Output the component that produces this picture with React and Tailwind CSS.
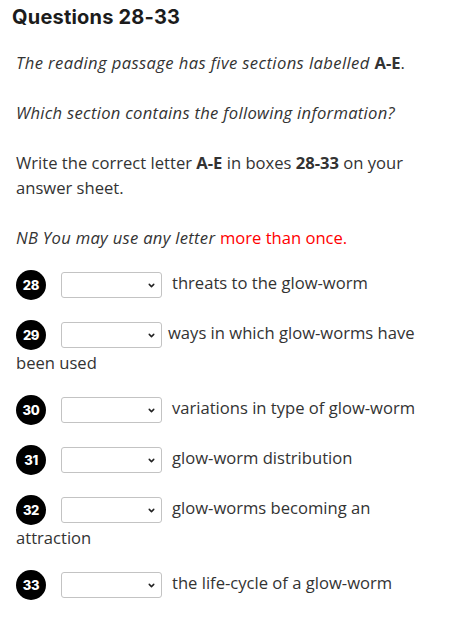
import { ChevronDown } from "lucide-react";

const rows = [
  { n: 28, text: "threats to the glow-worm", gap: "mr-[10px]" },
  { n: 29, text: "ways in which glow-worms have been used", gap: "mr-[6px]" },
  { n: 30, text: "variations in type of glow-worm", gap: "mr-[10px]" },
  { n: 31, text: "glow-worm distribution", gap: "mr-[10px]" },
  { n: 32, text: "glow-worms becoming an attraction", gap: "mr-[10px]" },
  { n: 33, text: "the life-cycle of a glow-worm", gap: "mr-[10px]" },
];

function Row({ n, text, gap }) {
  return (
    <div className="mb-5 leading-[25px]">
      <span className="mr-[15px] inline-flex h-[30px] w-[30px] items-center justify-center rounded-full bg-black align-middle font-['Inter',sans-serif] text-[13px] font-extrabold tracking-tight text-white">
        {n}
      </span>
      <span className={`relative inline-block h-[26px] w-[101px] rounded-[3px] border border-[#c3c3c3] bg-white align-middle ${gap}`}>
        <select className="h-full w-full appearance-none bg-transparent outline-none" aria-label={`Question ${n}`}>
          <option></option>
          <option>A</option>
          <option>B</option>
          <option>C</option>
          <option>D</option>
          <option>E</option>
        </select>
        <ChevronDown className="pointer-events-none absolute top-[8px] right-[5px] h-[9px] w-[9px] text-[#222]" strokeWidth={4} />
      </span>
      {text}
    </div>
  );
}

export default function App() {
  return (
    <div className="bg-white px-4 pt-[3px] pb-6 font-['Open_Sans',sans-serif] text-[16.6px] text-[#333]">
      <h2 className="-ml-1 mb-[19px] font-['Inter',sans-serif] text-[20px] leading-7 font-bold tracking-[0.2px] text-[#1c1c1c]">
        Questions 28-33
      </h2>
      <p className="mb-[25px] leading-[25px]">
        <em className="tracking-[0.4px]">The reading passage has five sections labelled </em>
        <strong>A-E</strong>.
      </p>
      <p className="mb-[25px] leading-[25px]">
        <em className="tracking-[0.3px]">Which section contains the following information?</em>
      </p>
      <p className="mb-[25px] leading-[25px]">
        Write the correct letter <strong>A-E</strong> in boxes <strong>28-33</strong> on your answer sheet.
      </p>
      <p className="mb-5 leading-[25px]">
        <em className="tracking-[0.3px]">NB You may use any letter </em>
        <span className="text-[#ff0000]">more than once.</span>
      </p>
      {rows.map((r) => (
        <Row key={r.n} {...r} />
      ))}
    </div>
  );
}
